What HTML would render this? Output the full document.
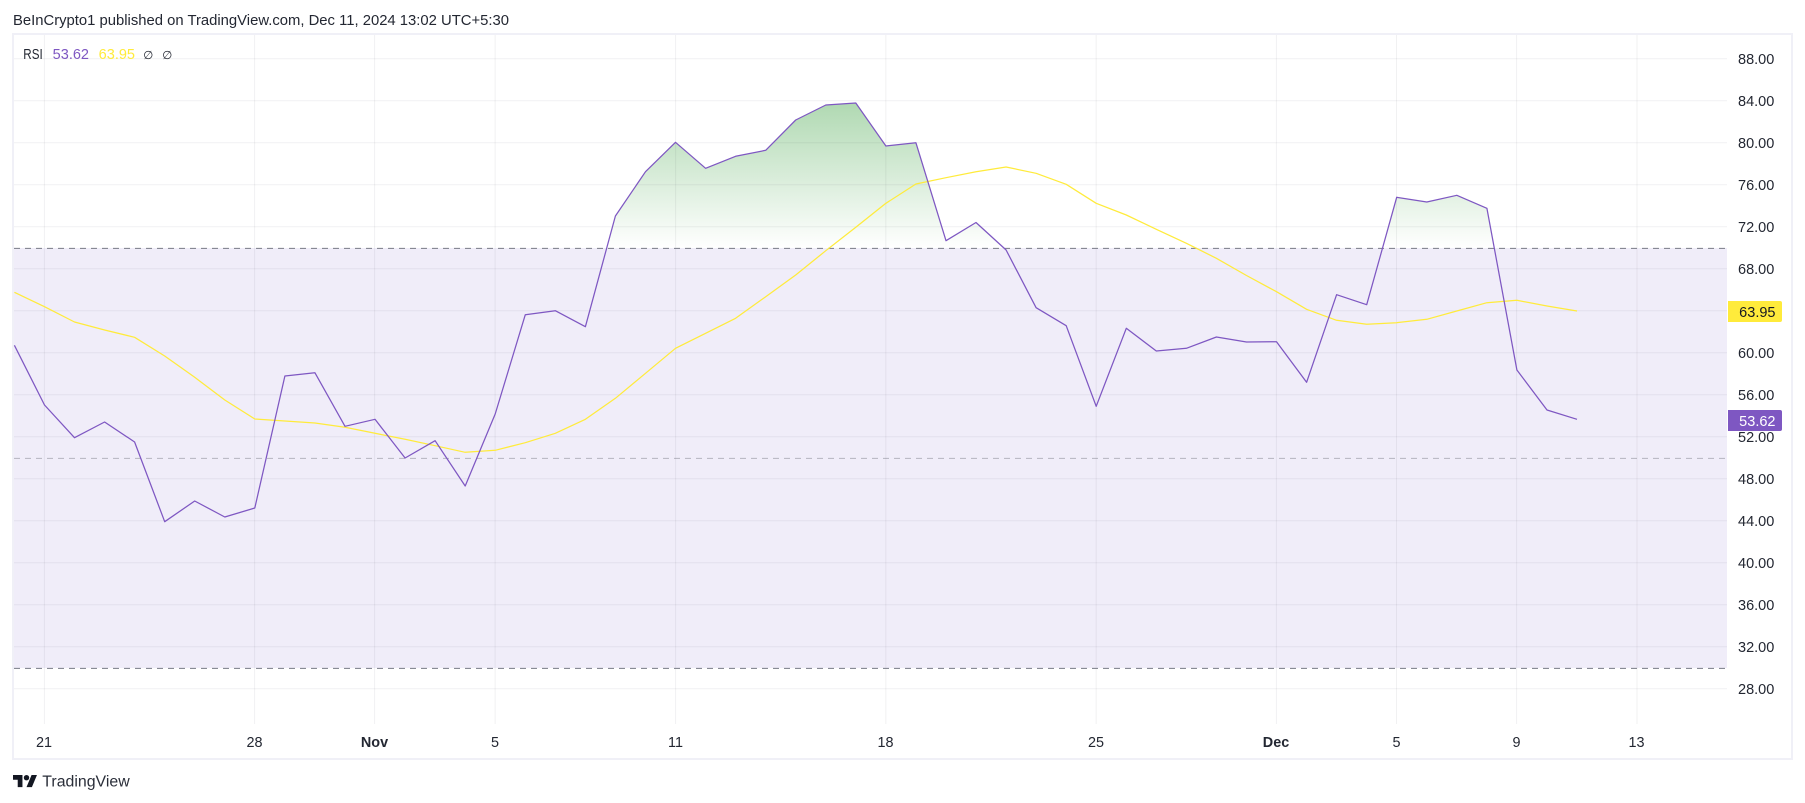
<!DOCTYPE html>
<html>
<head>
<meta charset="utf-8">
<title>RSI</title>
<style>
html,body{margin:0;padding:0;background:#fff;width:1805px;height:803px;overflow:hidden}
svg{display:block;position:absolute;left:0;top:0}
text{font-family:"Liberation Sans","DejaVu Sans",sans-serif;font-size:14.4px;fill:#232732}
</style>
</head>
<body>
<svg width="1805" height="803" viewBox="0 0 1805 803" xmlns="http://www.w3.org/2000/svg">
<defs>
<linearGradient id="g" gradientUnits="userSpaceOnUse" x1="0" y1="103" x2="0" y2="248">
<stop offset="0" stop-color="#b0d9b2"/>
<stop offset="1" stop-color="#ffffff"/>
</linearGradient>
<clipPath id="above"><rect x="14" y="36" width="1713" height="212"/></clipPath>
</defs>

<!-- header -->
<text x="13" y="25" textLength="496" lengthAdjust="spacingAndGlyphs">BeInCrypto1 published on TradingView.com, Dec 11, 2024 13:02 UTC+5:30</text>

<!-- frame -->
<rect x="13" y="34" width="1779" height="725" fill="#fff" stroke="#f0f0f7" stroke-width="2"/>

<!-- band -->
<rect x="14" y="248" width="1713" height="420" fill="#f0edf9"/>

<!-- green fill -->
<polygon clip-path="url(#above)" fill="url(#g)" points="14.4,345.3 44.5,405 74.5,437.7 104.6,422 134.6,442 164.7,521.7 194.7,501 224.8,517 254.8,508 284.9,376 314.9,372.7 345,426.3 375,419.3 405.1,458 435.1,440.7 465.2,486 495.2,414 525.3,314.7 555.3,310.7 585.4,326.7 615.4,216 645.5,171.7 675.5,142.3 705.6,168.3 735.6,156.3 765.7,150.3 795.7,120 825.8,105 855.8,103 885.9,146 915.9,142.7 946,240.7 976,222.5 1006.1,250 1036.1,307.7 1066.2,325.7 1096.2,406.3 1126.3,328.3 1156.3,351 1186.4,348.3 1216.4,337 1246.5,342 1276.5,341.7 1306.6,382.3 1336.6,294.7 1366.7,304.7 1396.7,197.3 1426.8,202 1456.8,195.3 1486.9,208.3 1516.9,370 1547,410 1577,419.3 1577,700 14.4,700"/>

<!-- grid -->
<g stroke="#2a2e39" stroke-opacity="0.065" stroke-width="1" fill="none">
<path d="M14 58.7H1727M14 100.7H1727M14 142.7H1727M14 184.7H1727M14 226.7H1727M14 268.7H1727M14 310.7H1727M14 352.7H1727M14 394.7H1727M14 436.7H1727M14 478.7H1727M14 520.7H1727M14 562.7H1727M14 604.7H1727M14 646.7H1727M14 688.7H1727"/>
<path d="M44.4 35V724M254.6 35V724M374.6 35V724M495.1 35V724M675.6 35V724M885.8 35V724M1096.2 35V724M1276.4 35V724M1396.5 35V724M1516.6 35V724M1637 35V724"/>
</g>

<!-- level lines -->
<g fill="none" stroke-width="1" stroke-dasharray="6 5">
<path d="M14 248.4H1727" stroke="#787b86"/>
<path d="M14 668.4H1727" stroke="#787b86"/>
<path d="M14 458.4H1727" stroke="#787b86" stroke-opacity="0.5"/>
</g>

<!-- signal line -->
<polyline fill="none" stroke="#ffeb3b" stroke-width="1.25" stroke-linejoin="round" points="14.4,292.3 44.5,306.7 74.5,322 104.6,330 134.6,337.3 164.7,356 194.7,377.3 224.8,400 254.8,419 284.9,421 314.9,423 345,427.3 375,433.3 405.1,439.3 435.1,445.7 465.2,452.3 495.2,450.3 525.3,442.7 555.3,433.3 585.4,419.3 615.4,398.3 645.5,373.3 675.5,348.3 705.6,333.3 735.6,318.3 765.7,296.7 795.7,275 825.8,250.7 855.8,227.3 885.9,203.3 915.9,184 946,177.7 976,171.7 1006.1,167 1036.1,173.3 1066.2,184.3 1096.2,203.3 1126.3,215 1156.3,229.3 1186.4,243.3 1216.4,258.3 1246.5,275.5 1276.5,291.7 1306.6,309.3 1336.6,320.3 1366.7,324.3 1396.7,322.7 1426.8,319.3 1456.8,311 1486.9,302.7 1516.9,300.3 1547,306 1577,311"/>

<!-- RSI line -->
<polyline fill="none" stroke="#7e57c2" stroke-width="1.25" stroke-linejoin="round" points="14.4,345.3 44.5,405 74.5,437.7 104.6,422 134.6,442 164.7,521.7 194.7,501 224.8,517 254.8,508 284.9,376 314.9,372.7 345,426.3 375,419.3 405.1,458 435.1,440.7 465.2,486 495.2,414 525.3,314.7 555.3,310.7 585.4,326.7 615.4,216 645.5,171.7 675.5,142.3 705.6,168.3 735.6,156.3 765.7,150.3 795.7,120 825.8,105 855.8,103 885.9,146 915.9,142.7 946,240.7 976,222.5 1006.1,250 1036.1,307.7 1066.2,325.7 1096.2,406.3 1126.3,328.3 1156.3,351 1186.4,348.3 1216.4,337 1246.5,342 1276.5,341.7 1306.6,382.3 1336.6,294.7 1366.7,304.7 1396.7,197.3 1426.8,202 1456.8,195.3 1486.9,208.3 1516.9,370 1547,410 1577,419.3"/>

<!-- legend -->
<text x="23.3" y="59" textLength="19.4" lengthAdjust="spacingAndGlyphs">RSI</text>
<text x="52.7" y="59" textLength="36.3" lengthAdjust="spacingAndGlyphs" style="fill:#7e57c2">53.62</text>
<text x="98.7" y="59" textLength="36.3" lengthAdjust="spacingAndGlyphs" style="fill:#ffeb3b">63.95</text>
<text x="143.2" y="59" style="font-family:'DejaVu Sans',sans-serif;font-size:11.5px">∅</text>
<text x="162.2" y="59" style="font-family:'DejaVu Sans',sans-serif;font-size:11.5px">∅</text>

<!-- price axis -->
<g>
<text x="1738" y="64.2" textLength="36.3" lengthAdjust="spacingAndGlyphs">88.00</text>
<text x="1738" y="106.2" textLength="36.3" lengthAdjust="spacingAndGlyphs">84.00</text>
<text x="1738" y="148.2" textLength="36.3" lengthAdjust="spacingAndGlyphs">80.00</text>
<text x="1738" y="190.2" textLength="36.3" lengthAdjust="spacingAndGlyphs">76.00</text>
<text x="1738" y="232.2" textLength="36.3" lengthAdjust="spacingAndGlyphs">72.00</text>
<text x="1738" y="274.2" textLength="36.3" lengthAdjust="spacingAndGlyphs">68.00</text>
<text x="1738" y="358.2" textLength="36.3" lengthAdjust="spacingAndGlyphs">60.00</text>
<text x="1738" y="400.2" textLength="36.3" lengthAdjust="spacingAndGlyphs">56.00</text>
<text x="1738" y="442.2" textLength="36.3" lengthAdjust="spacingAndGlyphs">52.00</text>
<text x="1738" y="484.2" textLength="36.3" lengthAdjust="spacingAndGlyphs">48.00</text>
<text x="1738" y="526.2" textLength="36.3" lengthAdjust="spacingAndGlyphs">44.00</text>
<text x="1738" y="568.2" textLength="36.3" lengthAdjust="spacingAndGlyphs">40.00</text>
<text x="1738" y="610.2" textLength="36.3" lengthAdjust="spacingAndGlyphs">36.00</text>
<text x="1738" y="652.2" textLength="36.3" lengthAdjust="spacingAndGlyphs">32.00</text>
<text x="1738" y="694.2" textLength="36.3" lengthAdjust="spacingAndGlyphs">28.00</text>
</g>

<!-- price labels -->
<path d="M1728 301H1780a2 2 0 0 1 2 2V320a2 2 0 0 1-2 2H1728Z" fill="#ffeb3b"/>
<text x="1739.2" y="317" textLength="36.3" lengthAdjust="spacingAndGlyphs" style="fill:#131722">63.95</text>
<path d="M1728 410H1780a2 2 0 0 1 2 2V429a2 2 0 0 1-2 2H1728Z" fill="#7e57c2"/>
<text x="1739.2" y="426" textLength="36.3" lengthAdjust="spacingAndGlyphs" style="fill:#ffffff">53.62</text>

<!-- time axis -->
<g text-anchor="middle">
<text x="44" y="747">21</text>
<text x="254.5" y="747">28</text>
<text x="374.5" y="747" style="font-weight:700">Nov</text>
<text x="495" y="747">5</text>
<text x="675.5" y="747">11</text>
<text x="885.5" y="747">18</text>
<text x="1096" y="747">25</text>
<text x="1276" y="747" style="font-weight:700">Dec</text>
<text x="1396.5" y="747">5</text>
<text x="1516.5" y="747">9</text>
<text x="1636.5" y="747">13</text>
</g>

<!-- logo -->
<g transform="translate(13 772.3) scale(0.675)" fill="#131722">
<path d="M14 22H7V11H0V4h14v18zM28 22h-8l7.5-18h8L28 22z"/>
<circle cx="20" cy="8" r="4"/>
</g>
<text x="42.3" y="786.5" textLength="87.4" lengthAdjust="spacingAndGlyphs" style="font-size:15.5px;fill:#2a2e39">TradingView</text>
</svg>
</body>
</html>
